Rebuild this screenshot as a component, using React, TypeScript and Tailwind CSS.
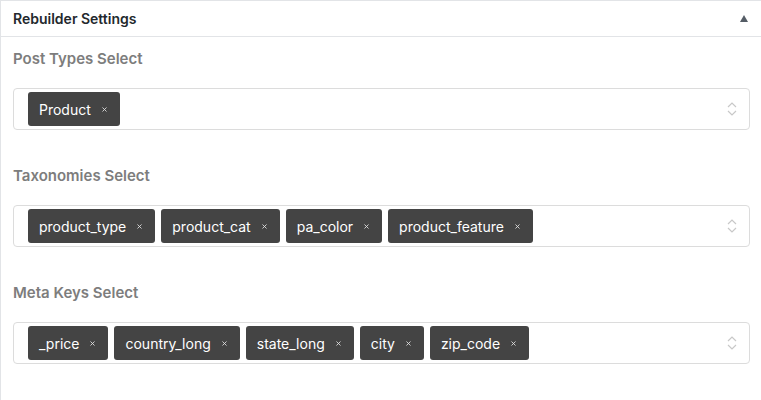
import { X } from 'lucide-react';

const SECTIONS = [
  { label: 'Post Types Select', tags: ['Product'] },
  { label: 'Taxonomies Select', tags: ['product_type', 'product_cat', 'pa_color', 'product_feature'] },
  { label: 'Meta Keys Select', tags: ['_price', 'country_long', 'state_long', 'city', 'zip_code'] },
];

function Chevrons() {
  return (
    <svg width="10" height="16" viewBox="0 0 10 16" fill="none" stroke="#c8c8c8" strokeWidth="1.2">
      <path d="M1 6 L5 2 L9 6" />
      <path d="M1 10 L5 14 L9 10" />
    </svg>
  );
}

export default function App() {
  return (
    <div className="w-[761px] h-[400px] overflow-hidden bg-white border-t border-l border-[#e2e4e7] font-['Inter','Helvetica',sans-serif]">
      {/* Panel header */}
      <div className="h-[36px] flex items-center justify-between pl-[12px] pr-[13px] border-b border-[#e2e4e7]">
        <span className="text-[14px] font-semibold text-[#23282d]">Rebuilder Settings</span>
        <svg width="8" height="7" viewBox="0 0 8 7">
          <polygon points="4,0 8,7 0,7" fill="#555d66" />
        </svg>
      </div>

      <div className="pl-[12px] pr-[11px] pt-[12px] flex flex-col gap-[36px]">
        {SECTIONS.map((section) => (
          <div key={section.label} className="flex flex-col gap-[19px]">
            <label className="text-[15px] leading-[20px] font-semibold text-[#7d7d7d]">
              {section.label}
            </label>
            <div className="h-[42px] flex items-center justify-between border border-[#dcdcdc] rounded-[4px] pl-[14px] pr-[12px]">
              <div className="flex items-center gap-[6px]">
                {section.tags.map((tag) => (
                  <span
                    key={tag}
                    className="h-[34px] flex items-center gap-[10px] pl-[11px] pr-[12px] rounded-[3px] bg-[#444444] text-white text-[14px]"
                  >
                    {tag}
                    <X className="w-[7px] h-[7px] text-[#e0e0e0]" strokeWidth={3} />
                  </span>
                ))}
              </div>
              <Chevrons />
            </div>
          </div>
        ))}
      </div>
    </div>
  );
}
